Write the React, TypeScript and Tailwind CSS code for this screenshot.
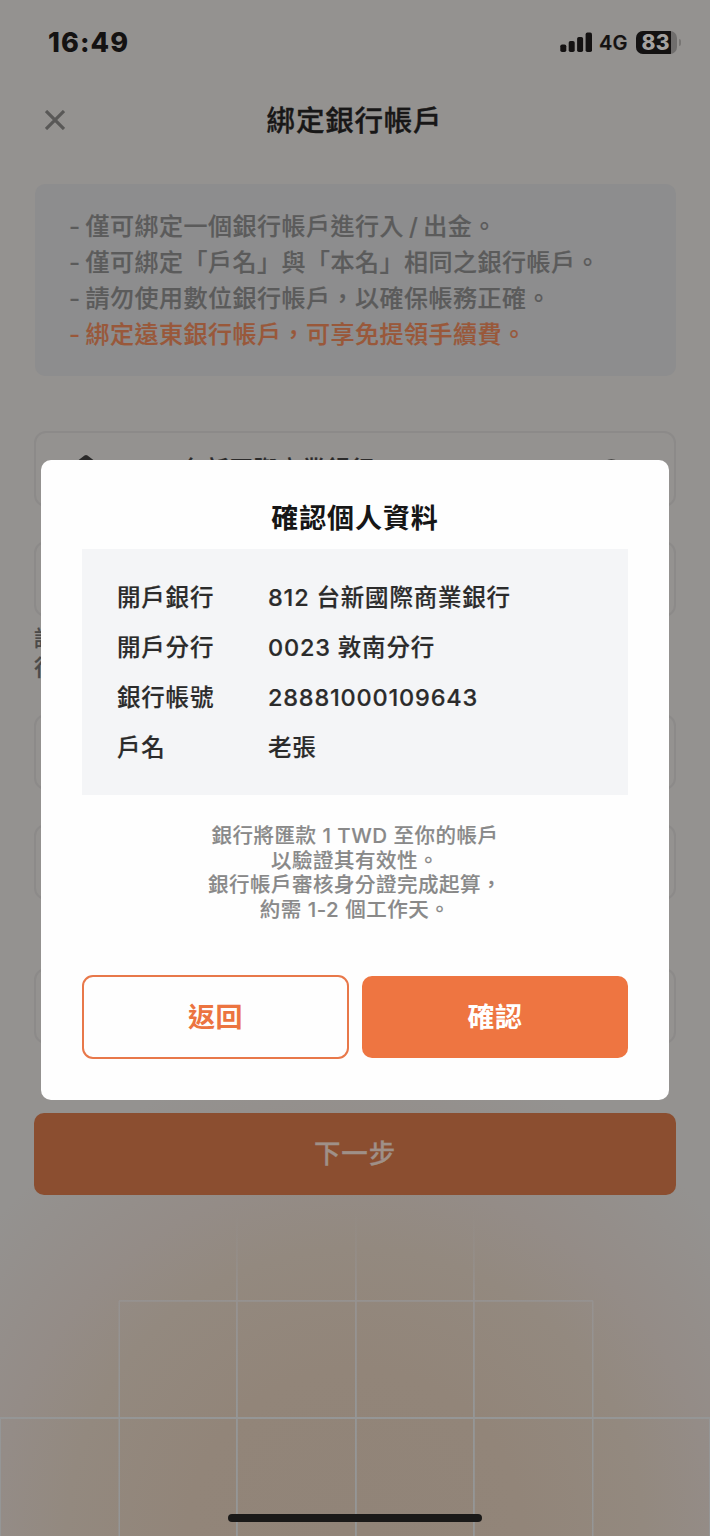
import React from "react";
import { Search } from "lucide-react";

const notes = [
  "- 僅可綁定一個銀行帳戶進行入 / 出金。",
  "- 僅可綁定「戶名」與「本名」相同之銀行帳戶。",
  "- 請勿使用數位銀行帳戶，以確保帳務正確。",
];

const details = [
  { label: "開戶銀行", value: "812 台新國際商業銀行" },
  { label: "開戶分行", value: "0023 敦南分行" },
  { label: "銀行帳號", value: "28881000109643" },
  { label: "戶名", value: "老張" },
];

const GridBackdrop = () => (
  <svg
    className="absolute inset-x-0 bottom-0 h-[536px] w-[710px]"
    viewBox="0 0 710 536"
    fill="none"
  >
    <defs>
      <radialGradient
        id="glow"
        cx="355"
        cy="536"
        r="480"
        gradientUnits="userSpaceOnUse"
      >
        <stop offset="0" stopColor="#918478" />
        <stop offset="0.35" stopColor="#928579" />
        <stop offset="0.6" stopColor="#93897f" />
        <stop offset="0.75" stopColor="#948c87" />
        <stop offset="1" stopColor="#949290" />
      </radialGradient>
      <linearGradient
        id="fade"
        x1="0"
        y1="210"
        x2="0"
        y2="420"
        gradientUnits="userSpaceOnUse"
      >
        <stop offset="0" stopColor="#95908d" stopOpacity="0" />
        <stop offset="0.45" stopColor="#969290" />
        <stop offset="1" stopColor="#959696" />
      </linearGradient>
    </defs>
    <rect width="710" height="536" fill="url(#glow)" />
    <g fill="url(#fade)">
      <rect x="0" y="417" width="1" height="119" />
      <rect x="118.5" y="301" width="1.5" height="235" />
      <rect x="236" y="210" width="1.8" height="326" />
      <rect x="355" y="210" width="1.8" height="326" />
      <rect x="473" y="210" width="1.8" height="326" />
      <rect x="592" y="301" width="1.5" height="235" />
      <rect x="709" y="417" width="1" height="119" />
      <rect x="119" y="300" width="474" height="1.8" />
      <rect x="0" y="417" width="710" height="2" />
    </g>
  </svg>
);

const StatusBar = () => (
  <div className="flex h-[84px] items-center justify-between pl-[48px] pr-[29px] text-[#141212]">
    <span className="pt-px text-[27px] font-extrabold leading-none tracking-[1.1px]">
      16:49
    </span>
    <div className="flex items-center">
      <svg className="h-[20px] w-[34px]" viewBox="0 0 34 20" fill="currentColor">
        <rect x="0.3" y="12.5" width="6" height="7.5" rx="1.8" />
        <rect x="8.7" y="9" width="6" height="11" rx="1.8" />
        <rect x="17.1" y="5" width="6" height="15" rx="1.8" />
        <rect x="25.6" y="0.6" width="6.4" height="19.4" rx="1.8" />
      </svg>
      <span className="ml-[5px] w-[37px] pt-[2px] text-[20px] font-semibold leading-none tracking-[0.2px] [-webkit-text-stroke:0.2px]">
        4G
      </span>
      <div className="relative flex h-[23px] w-[41px] items-center overflow-hidden rounded-[7px] bg-[#706e6d]">
        <div className="h-full w-[35px] bg-[#141212]" />
        <span className="absolute left-[5.5px] pt-px text-[21px] font-extrabold leading-none tracking-[0.2px] text-[#a5a3a1]">
          83
        </span>
      </div>
      <div className="ml-[2px] h-[7px] w-[2px] rounded-r-full bg-[#777573]" />
    </div>
  </div>
);

const Field = ({
  className,
  children,
}: {
  className?: string;
  children?: React.ReactNode;
}) => (
  <div
    className={`h-[76px] rounded-[12px] border-2 border-[#8c8a89] ${className ?? ""}`}
  >
    {children}
  </div>
);

const ConfirmDialog = () => (
  <div className="absolute left-[41px] top-[460px] h-[640px] w-[628px] rounded-[10px] bg-[#fefefe] px-[41px] pt-[41px]">
    <h2 className="h-[48px] text-center text-[27px] font-bold leading-[36px] tracking-[0.9px] text-[#161616]">
      確認個人資料
    </h2>
    <dl className="h-[246px] bg-[#f4f5f7] pl-[35px] pt-[24px]">
      {details.map((row) => (
        <div
          key={row.label}
          className="flex h-[50px] items-center text-[23.5px] font-medium tracking-[0.8px] text-[#2b2b2b] [-webkit-text-stroke:0.2px]"
        >
          <dt className="w-[151px]">{row.label}</dt>
          <dd>{row.value}</dd>
        </div>
      ))}
    </dl>
    <p className="mt-[29px] text-center text-[20.5px] font-medium leading-[24.7px] tracking-[0.5px] text-[#898989] [-webkit-text-stroke:0.15px]">
      銀行將匯款 1 TWD 至你的帳戶
      <br />
      以驗證其有效性。
      <br />
      銀行帳戶審核身分證完成起算，
      <br />
      約需 1-2 個工作天。
    </p>
    <div className="mt-[52px] flex items-center gap-[13px] text-[27px] font-bold tracking-[0.5px]">
      <button className="h-[84px] w-[267px] rounded-[11px] border-2 border-[#e8784a] pt-[2px] text-[#ec7440]">
        返回
      </button>
      <button className="h-[82px] w-[266px] rounded-[10px] bg-[#ee7541] pt-[2px] text-white">
        確認
      </button>
    </div>
  </div>
);

export default function App() {
  return (
    <div className="relative h-[1536px] w-[710px] overflow-hidden bg-[#949290] font-['Inter','Noto_Sans_CJK_TC',sans-serif]">
      <GridBackdrop />

      <div className="relative">
        <StatusBar />

        {/* Title row */}
        <header className="flex h-[72px] items-center px-[45px]">
          <svg
            className="h-[20px] w-[20px] text-[#595857]"
            viewBox="0 0 20 20"
            fill="none"
            stroke="currentColor"
            strokeWidth="3.2"
          >
            <path d="M1 1l18 18M19 1L1 19" />
          </svg>
          <h1 className="flex-1 pr-[21px] pt-[2px] text-center text-[28.5px] font-medium leading-none tracking-[0.8px] text-[#181717] [-webkit-text-stroke:0.4px]">
            綁定銀行帳戶
          </h1>
        </header>

        <main className="px-[34px]">
          <section className="ml-px mt-[28px] h-[192px] rounded-[10px] bg-[#8d8d8e] pl-[34px] pt-[25px] text-[24px] font-medium leading-[36px] tracking-[0.5px] text-[#5b5b5b] [-webkit-text-stroke:0.2px] [word-spacing:-2px]">
            {notes.map((note) => (
              <p key={note}>{note}</p>
            ))}
            <p className="text-[#99583a]">
              - 綁定遠東銀行帳戶，可享免提領手續費。
            </p>
          </section>

          {/* Account form */}
          <Field className="mt-[55px] flex items-center px-[40px] text-[#2b2a2a]">
            <svg className="h-[28px] w-[20px]" viewBox="0 0 20 28" fill="currentColor">
              <path d="M8.5 .6Q10 -.4 11.5 .6L20 7V9H0V7zM2 11h3v10H2zM8.5 11h3v10h-3zM15 11h3v10h-3zM0 23h20v3H0z" />
            </svg>
            <span className="ml-[85px] flex-1 pt-[2px] text-[23.5px] font-medium tracking-[0.7px] [-webkit-text-stroke:0.2px]">
              台新國際商業銀行
            </span>
            <Search className="mr-[9px] h-[25px] w-[25px] text-[#4b4a49]" />
          </Field>
          <Field className="mt-[34px]" />
          <p className="mt-[7px] h-[60px] text-[22px] font-medium leading-[29px] text-[#4b4a49] [-webkit-text-stroke:0.2px]">
            請
            <br />行
          </p>
          <Field className="mt-[30px]" />
          <Field className="mt-[34px]" />
          <Field className="mt-[68px]" />
          <button className="mt-[69px] h-[82px] w-[642px] rounded-[10px] bg-[#8b4e30] text-[26.5px] font-medium tracking-[0.8px] text-[#9f9088] [-webkit-text-stroke:0.3px]">
            下一步
          </button>
        </main>
      </div>

      <ConfirmDialog />

      {/* Home indicator */}
      <div className="absolute bottom-[14px] left-[228px] h-[8px] w-[254px] rounded-full bg-[#1a1918]" />
    </div>
  );
}
